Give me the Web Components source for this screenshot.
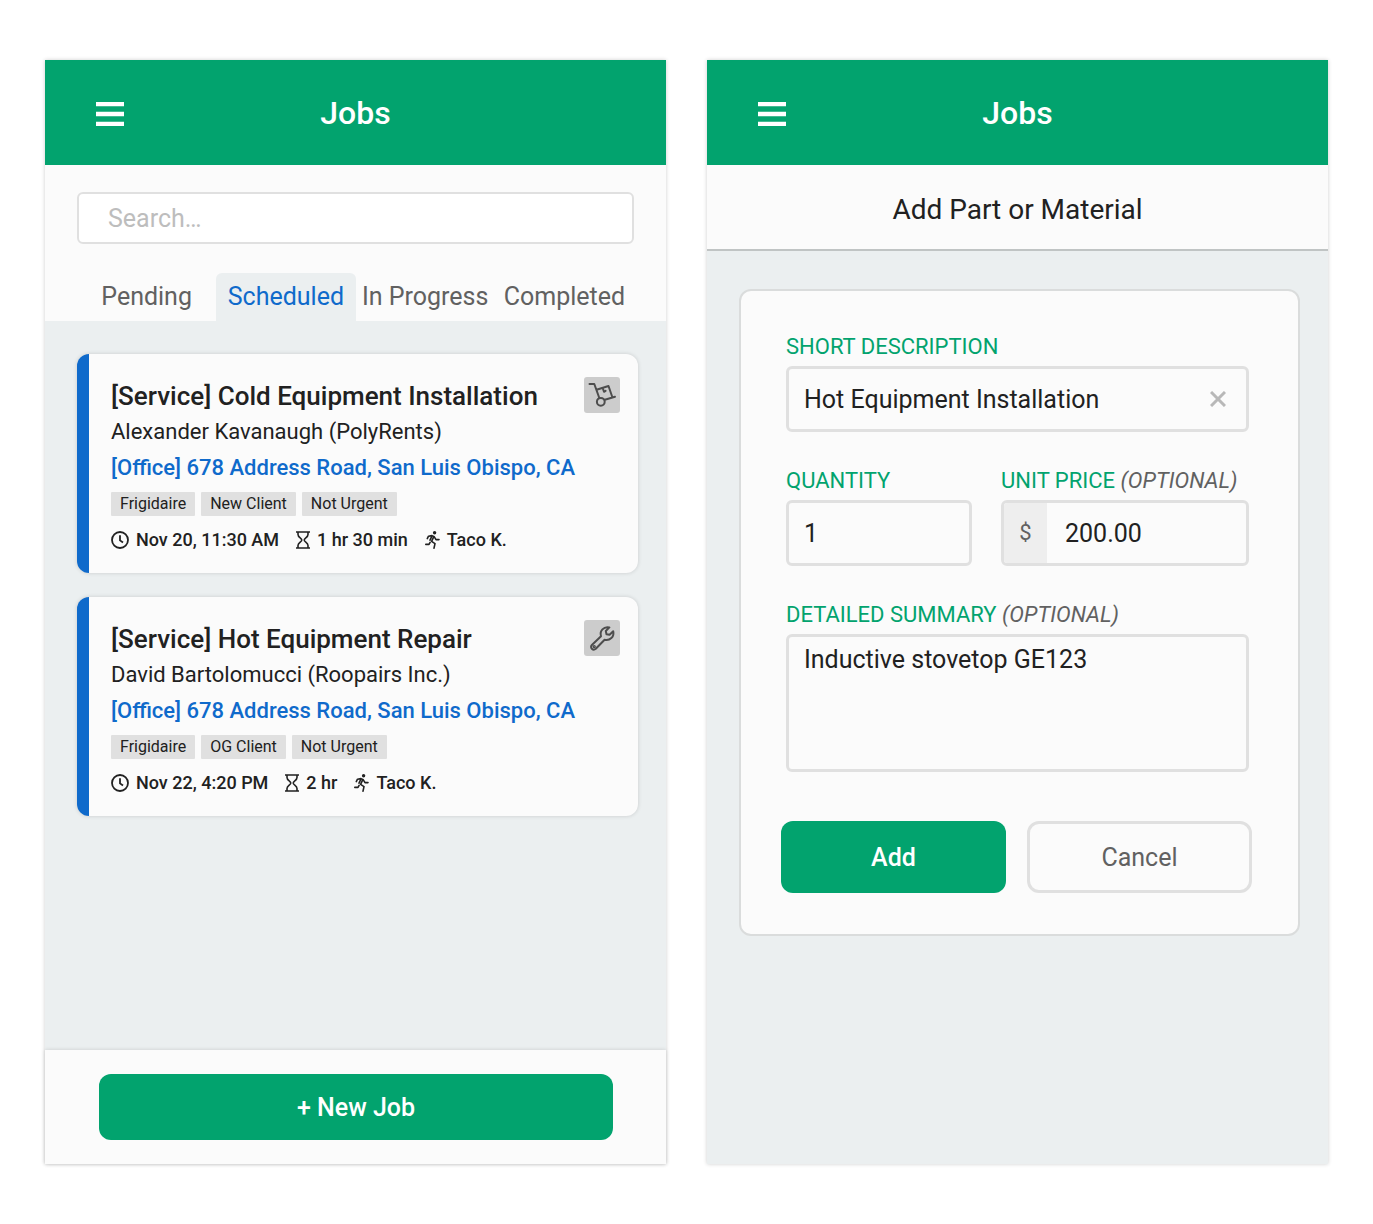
<!DOCTYPE html>
<html lang="en">
<head>
<meta charset="utf-8">
<meta name="viewport" content="width=device-width, initial-scale=1">
<title>Jobs</title>
<style>
  :root {
    --green: #02a36e;
    --blue: #0f6acb;
    --ink: #212121;
    --muted: #616161;
    --line: #e0e0e0;
    --surface: #fbfbfb;
    --canvas: #ebeff0;
  }
  * { box-sizing: border-box; }
  body {
    margin: 0;
    min-height: 100vh;
    padding: 60px 45px;
    display: flex;
    gap: 41px;
    background: #fff;
    color: var(--ink);
    font-family: Roboto, "Liberation Sans", sans-serif;
  }
</style>
</head>
<body>
<app-screen heading="Jobs">
  <job-filters slot="top"></job-filters>
  <job-card heading="[Service] Cold Equipment Installation" client="Alexander Kavanaugh (PolyRents)"
    address="[Office] 678 Address Road, San Luis Obispo, CA" when="Nov 20, 11:30 AM" duration="1 hr 30 min" worker="Taco K." kind="dolly">
    <tag-chip>Frigidaire</tag-chip><tag-chip>New Client</tag-chip><tag-chip>Not Urgent</tag-chip>
  </job-card>
  <job-card heading="[Service] Hot Equipment Repair" client="David Bartolomucci (Roopairs Inc.)"
    address="[Office] 678 Address Road, San Luis Obispo, CA" when="Nov 22, 4:20 PM" duration="2 hr" worker="Taco K." kind="wrench">
    <tag-chip>Frigidaire</tag-chip><tag-chip>OG Client</tag-chip><tag-chip>Not Urgent</tag-chip>
  </job-card>
  <screen-footer slot="bottom"><app-button>+ New Job</app-button></screen-footer>
</app-screen>

<app-screen heading="Jobs">
  <screen-title slot="top">Add Part or Material</screen-title>
  <part-form></part-form>
</app-screen>

<script>
const base = '*{box-sizing:border-box}button,input,textarea{font-family:inherit;color:inherit;margin:0}';

const define = (name, render) => customElements.define(name, class extends HTMLElement {
  constructor() {
    super();
    this.attachShadow({ mode: 'open' });
  }
  connectedCallback() {
    this.shadowRoot.innerHTML = '<style>' + base + '</style>' + render(this);
  }
});

const icons = {
  menu: '<svg width="28" height="26" viewBox="0 0 28 26" fill="currentColor"><path d="M0 1h28v4.300H0zM0 10.800h28v4.400H0zM0 20.700h28v4.300H0z"/></svg>',
  clock: '<svg width="18" height="18" viewBox="0 0 18 18" fill="none" stroke="currentColor" stroke-width="1.8"><circle cx="9" cy="9" r="8"/><path d="M9 4.200V9.400L12 11.600"/></svg>',
  hourglass: '<svg width="14" height="18" viewBox="0 0 14 18" fill="none" stroke="currentColor" stroke-width="1.6"><path d="M0 1H14M0 17H14M2 1V3.500C2 6.500 5.800 7 5.800 9S2 11.500 2 14.500V17M12 1V3.500C12 6.500 8.200 7 8.200 9S12 11.500 12 14.500V17"/></svg>',
  runner: '<svg width="15" height="18" viewBox="0 0 15 18" fill="none" stroke="currentColor" stroke-width="1.6" stroke-linecap="round" stroke-linejoin="round"><circle cx="9.600" cy="1.800" r="1.700" fill="currentColor" stroke="none"/><path d="M2.300 7.600L3.500 5.200 7 4.600 9.300 5.800 11 8.600H14M8.800 5.600L6.600 10.300 10 12.600 9 17.200M7 4.800L5 9.200M5.100 11.400L4 13.400H.8"/></svg>',
  dolly: '<svg width="36" height="36" viewBox="0 0 36 36" fill="none" stroke="#4d4d4d" stroke-width="2" stroke-linecap="round" stroke-linejoin="round"><path d="M5.500 7H10.300L15.300 21M12.500 12.800L24.500 9 28.200 19.800M20.800 22.800L31 19.800M18.800 11.200L20 14.800 21.600 13.800"/><circle cx="16.800" cy="24.800" r="3.900"/></svg>',
  wrench: '<svg width="36" height="36" viewBox="0 0 36 36" fill="none" stroke="#4d4d4d" stroke-width="2" stroke-linejoin="round"><path d="M7.900 25L17 16.200C15.400 11 19.600 6 25.400 7.400L21.800 11 22.500 14.200 25.600 14.800 29.200 11.200C30.600 16.800 25.800 21 20.600 19.800L11.800 28.800C9 31 5.400 27.600 7.900 25Z"/><circle cx="10.200" cy="26.600" r=".7"/></svg>',
  close: '<svg width="16" height="16" viewBox="0 0 16 16" fill="none" stroke="#b8b8b8" stroke-width="3"><path d="M1 1L15 15M15 1L1 15"/></svg>'
};

define('app-screen', el => `
  <style>
    :host { flex: 1 1 0; min-width: 0; display: flex; flex-direction: column; background: var(--canvas); box-shadow: 0 0 4px rgba(0,0,0,.2); }
    header { height: 105px; padding: 0 51px; display: grid; grid-template-columns: 1fr auto 1fr; align-items: center; background: var(--green); color: #fff; }
    header button { justify-self: start; display: flex; padding: 3px 0 0; border: 0; background: none; color: inherit; }
    h1 { margin: 0; font-size: 32px; line-height: 36px; font-weight: 500; }
    main { flex: 1; display: flex; flex-direction: column; gap: 24px; padding: 33px 28px 32px 32px; }
  </style>
  <header><button type="button" aria-label="Menu">${icons.menu}</button><h1>${el.getAttribute('heading')}</h1></header>
  <slot name="top"></slot>
  <main><slot></slot></main>
  <slot name="bottom"></slot>`);

define('job-filters', () => `
  <style>
    :host { display: block; padding: 27px 32px 0; background: var(--surface); }
    input { display: block; width: 100%; height: 52px; padding: 0 29px; font-size: 25px; border: 2px solid var(--line); border-radius: 6px; background: #fff; }
    input::placeholder { color: #bdbdbd; opacity: 1; }
    nav { display: grid; grid-template-columns: repeat(4, 1fr); margin-top: 29px; }
    a { height: 48px; line-height: 48px; font-size: 25px; text-align: center; white-space: nowrap; color: var(--muted); text-decoration: none; border-radius: 6px 6px 0 0; }
    a[aria-current] { background: var(--canvas); color: var(--blue); }
  </style>
  <input type="search" aria-label="Search jobs" placeholder="Search…">
  <nav><a href="#pending">Pending</a><a href="#scheduled" aria-current="page">Scheduled</a><a href="#progress">In Progress</a><a href="#completed">Completed</a></nav>`);

define('tag-chip', () => `
  <style>:host { display: block; height: 24px; padding: 0 9px; line-height: 24px; font-size: 16px; background: var(--line); border-radius: 1px; }</style>
  <slot></slot>`);

define('job-card', el => {
  const get = name => el.getAttribute(name);
  return `
  <style>
    :host { display: flex; align-items: flex-start; padding: 23px 18px 21px 22px; background: var(--surface); border-left: 12px solid var(--blue); border-radius: 12px; box-shadow: 0 0 4px rgba(0,0,0,.15); }
    section { flex: 1; min-width: 0; padding-top: 1px; white-space: nowrap; line-height: 36px; }
    h2, p { margin: 0; }
    h2 { font-size: 26px; font-weight: 500; }
    p { font-size: 22px; }
    .address { display: block; font-size: 22px; font-weight: 500; color: var(--blue); text-decoration: none; }
    .tags { display: flex; gap: 6px; margin: 6px 0 12px; }
    .meta { display: flex; gap: 17px; line-height: 24px; font-size: 18px; font-weight: 500; }
    .meta span { display: flex; align-items: center; gap: 7px; }
    .kind { flex: none; width: 36px; height: 36px; background: #ccc; border-radius: 3px; }
    svg { display: block; flex: none; }
  </style>
  <section>
    <h2>${get('heading')}</h2>
    <p>${get('client')}</p>
    <a class="address" href="#map">${get('address')}</a>
    <div class="tags"><slot></slot></div>
    <div class="meta"><span>${icons.clock}${get('when')}</span><span>${icons.hourglass}${get('duration')}</span><span>${icons.runner}${get('worker')}</span></div>
  </section>
  <div class="kind">${icons[get('kind')]}</div>`;
});

define('app-button', el => `
  <style>
    :host { display: block; flex: 1; }
    button { display: block; width: 100%; height: ${el.hasAttribute('tall') ? 72 : 66}px; border: 0; border-radius: 12px; background: var(--green); color: #fff; font-size: 25px; font-weight: 500; }
    :host([plain]) button { border: 3px solid var(--line); background: none; color: var(--muted); font-weight: 400; }
  </style>
  <button type="button"><slot></slot></button>`);

define('screen-footer', () => `
  <style>:host { display: block; padding: 24px 53px 24px 54px; background: var(--surface); box-shadow: 0 0 4px rgba(0,0,0,.15); }</style>
  <slot></slot>`);

define('screen-title', () => `
  <style>
    :host { display: block; height: 86px; background: var(--surface); border-bottom: 2px solid #c0c4c4; }
    h2 { margin: 0; font-size: 28px; line-height: 90px; font-weight: 400; text-align: center; }
  </style>
  <h2><slot></slot></h2>`);

define('form-field', el => {
  const value = el.getAttribute('value');
  const note = el.hasAttribute('optional') ? ' <i>(OPTIONAL)</i>' : '';
  const prefix = el.getAttribute('prefix');
  return `
  <style>
    :host { display: flex; flex-direction: column; gap: 7px; min-width: 0; }
    label { line-height: 25px; font-size: 22px; color: var(--green); white-space: nowrap; }
    i { color: var(--muted); }
    .box { display: flex; align-items: stretch; border: 3px solid var(--line); border-radius: 6px; overflow: hidden; }
    .prefix { flex: none; width: 43px; line-height: 60px; text-align: center; font-size: 22px; color: var(--muted); background: #eee; }
    input, textarea { flex: 1; min-width: 0; width: 100%; padding: 0 15px; border: 0; outline: 0; background: none; font-size: 25px; }
    input { height: 60px; }
    .prefix + input { padding-left: 18px; }
    textarea { display: block; height: 132px; padding-top: 8px; line-height: 30px; resize: none; }
    button { flex: none; display: flex; align-items: center; padding: 0 20px; border: 0; background: none; }
  </style>
  <label for="field">${el.getAttribute('label')}${note}</label>
  <div class="box">${prefix ? `<span class="prefix">${prefix}</span>` : ''}${el.hasAttribute('multiline')
    ? `<textarea id="field">${value}</textarea>`
    : `<input id="field" type="text" value="${value}">`}${el.hasAttribute('clearable')
    ? `<button type="button" aria-label="Clear">${icons.close}</button>` : ''}</div>`;
});

define('part-form', () => `
  <style>
    :host { display: block; margin-top: 5px; padding: 43px 46px 41px 40px; background: var(--surface); border: 2px solid #dadcdc; border-radius: 12px; }
    .fields { display: grid; gap: 36px; padding: 0 3px 0 5px; }
    .pair { display: grid; grid-template-columns: 3fr 4fr; gap: 29px; }
    .actions { display: flex; gap: 21px; margin-top: 49px; }
  </style>
  <form>
    <div class="fields">
      <form-field label="SHORT DESCRIPTION" value="Hot Equipment Installation" clearable></form-field>
      <div class="pair">
        <form-field label="QUANTITY" value="1"></form-field>
        <form-field label="UNIT PRICE" value="200.00" prefix="$" optional></form-field>
      </div>
      <form-field label="DETAILED SUMMARY" value="Inductive stovetop GE123" multiline optional></form-field>
    </div>
    <div class="actions"><app-button tall>Add</app-button><app-button tall plain>Cancel</app-button></div>
  </form>`);
</script>
</body>
</html>
